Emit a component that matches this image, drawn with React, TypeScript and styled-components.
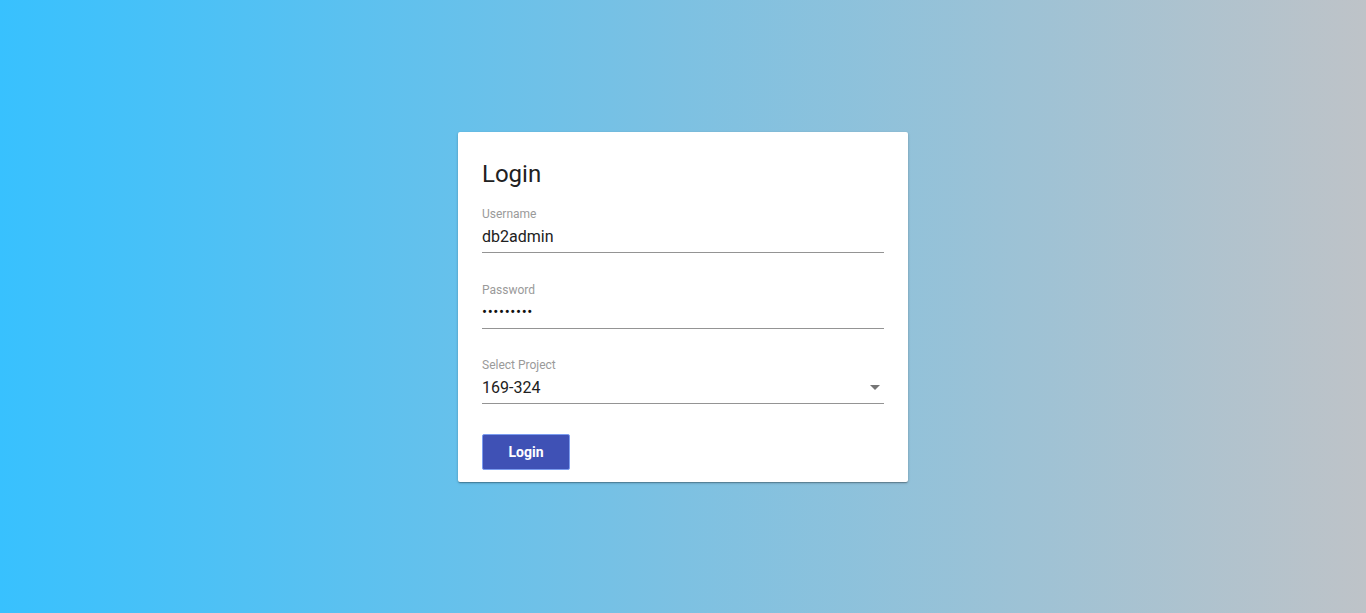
import React from "react";
import styled, { createGlobalStyle } from "styled-components";

const Global = createGlobalStyle`
  html, body { margin: 0; padding: 0; }
  body { font-family: Roboto, "Noto Sans", sans-serif; }
  * { box-sizing: border-box; }
`;

const Page = styled.div`
  width: 100%;
  height: 613px;
  background: linear-gradient(to right, #38c1fe 0%, #7dc1e2 50%, #bec3c8 100%);
  display: flex;
  justify-content: center;
  padding-top: 132px;
`;

const Card = styled.form`
  width: 450px;
  height: 350px;
  background: #fff;
  border-radius: 2px;
  box-shadow: 0 1px 3px rgba(0, 0, 0, 0.2), 0 1px 1px rgba(0, 0, 0, 0.14), 0 2px 1px -1px rgba(0, 0, 0, 0.12);
  padding: 24px 24px 12px;
  display: flex;
  flex-direction: column;
`;

const Title = styled.h2`
  margin: 2px 0 16px;
  font-size: 24px;
  line-height: 32px;
  font-weight: 400;
  color: #212121;
`;

const Field = styled.div<{ $gap: number }>`
  display: flex;
  flex-direction: column;
  margin-bottom: ${(p) => p.$gap}px;
  position: relative;
`;

const Label = styled.label`
  font-size: 12px;
  line-height: 17px;
  color: #9a9a9a;
`;

const Input = styled.div`
  font-size: 16px;
  line-height: 19px;
  height: 30px;
  padding: 4px 0 6px;
  color: #212121;
  border-bottom: 1px solid #949494;
`;

const Dots = styled(Input)`
  font-size: 15px;
  letter-spacing: 0.6px;
  color: #111;
`;

const Arrow = styled.svg`
  position: absolute;
  right: -3px;
  bottom: 5px;
  width: 24px;
  height: 24px;
  fill: #757575;
`;

const Button = styled.button`
  width: 88px;
  height: 36px;
  background: #3f51b5;
  border: 1px solid #7b9cf0;
  border-radius: 2px;
  color: #fff;
  font-family: Roboto, sans-serif;
  font-size: 14px;
  font-weight: 700;
  padding: 0;
  cursor: pointer;
`;

export default function App() {
  return (
    <>
      <Global />
      <Page>
        <Card>
          <Title>Login</Title>
          <Field $gap={29}>
            <Label>Username</Label>
            <Input>db2admin</Input>
          </Field>
          <Field $gap={28}>
            <Label>Password</Label>
            <Dots>•••••••••</Dots>
          </Field>
          <Field $gap={30}>
            <Label>Select Project</Label>
            <Input>169-324</Input>
            <Arrow viewBox="0 0 24 24">
              <path d="M7 10l5 5 5-5z" />
            </Arrow>
          </Field>
          <div>
            <Button type="button">Login</Button>
          </div>
        </Card>
      </Page>
    </>
  );
}
